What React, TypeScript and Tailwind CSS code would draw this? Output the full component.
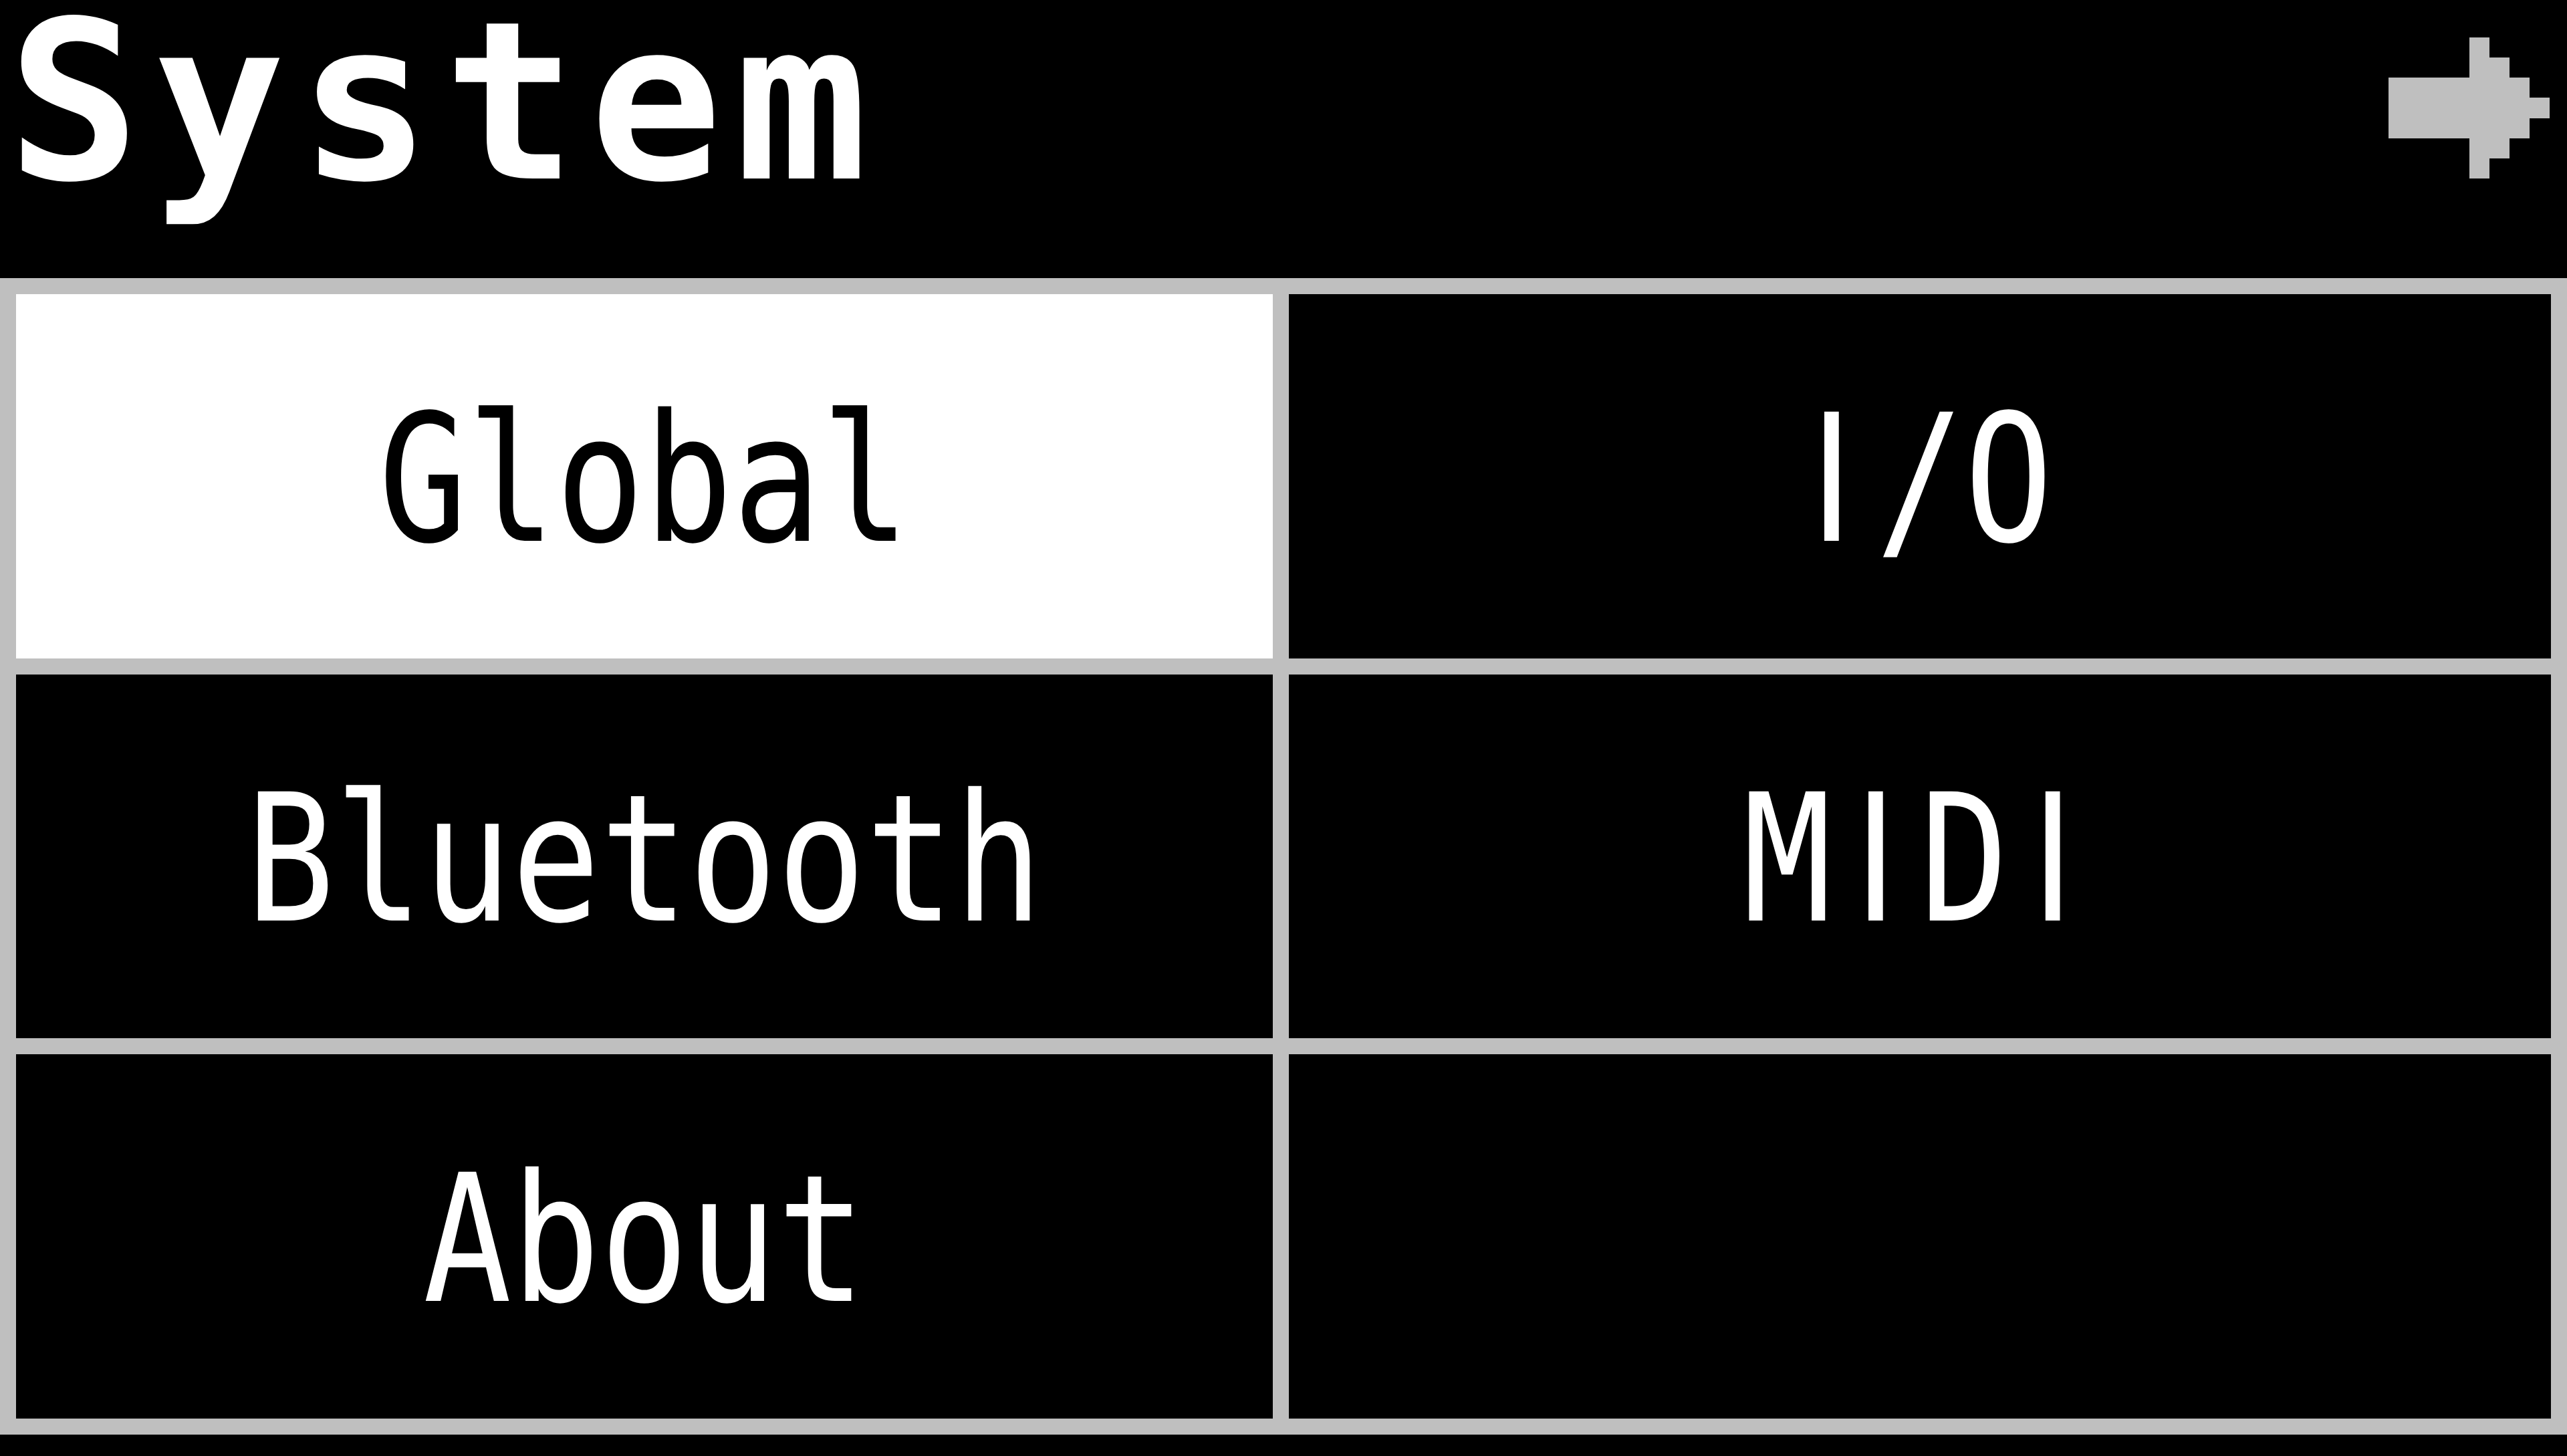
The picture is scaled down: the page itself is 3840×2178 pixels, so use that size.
import React from "react";

const mono = { fontFamily: '"DejaVu Sans Mono", "Liberation Mono", monospace' };
const sans = { fontFamily: '"DejaVu Sans", "Liberation Sans", sans-serif' };

function Arrow() {
  return (
    <svg width="241" height="211" viewBox="0 0 8 7" shapeRendering="crispEdges">
      <path fill="#bfbfbf" d="M0 2H4V0H5V1H6V2H7V3H8V4H7V5H6V6H5V7H4V5H0Z" />
    </svg>
  );
}

function Label({ text }: { text: string }) {
  return (
    <>
      {text.split("").map((ch, i) =>
        ch === "I" ? (
          <span key={i} className="inline-block w-[159.5px] text-center" style={sans}>
            I
          </span>
        ) : (
          <span key={i}>{ch}</span>
        )
      )}
    </>
  );
}

function Cell({ label, selected }: { label?: string; selected?: boolean }) {
  return (
    <div
      className={
        "flex items-center justify-center overflow-hidden " +
        (selected ? "bg-white text-black" : "bg-black text-white")
      }
    >
      {label ? (
        <span
          className="block pt-[10px] text-[265px] leading-none whitespace-pre scale-x-[0.83]"
          style={mono}
        >
          <Label text={label} />
        </span>
      ) : null}
    </div>
  );
}

export default function App() {
  return (
    <div className="w-[3840px] h-[2178px] bg-black flex flex-col overflow-hidden">
      <div className="h-[416px] flex justify-between items-start">
        <span
          className="block pl-[11px] text-[330px] leading-[306px] font-bold tracking-[19px] text-white whitespace-pre"
          style={mono}
        >
          System
        </span>
        <div className="mt-[56px] mr-[26px]">
          <Arrow />
        </div>
      </div>
      <div className="h-[1730px] bg-[#bfbfbf] p-[24px] grid grid-cols-[1880px_1fr] grid-rows-3 gap-[24px]">
        <Cell label="Global" selected />
        <Cell label="I/O" />
        <Cell label="Bluetooth" />
        <Cell label="MIDI" />
        <Cell label="About" />
        <Cell />
      </div>
    </div>
  );
}
